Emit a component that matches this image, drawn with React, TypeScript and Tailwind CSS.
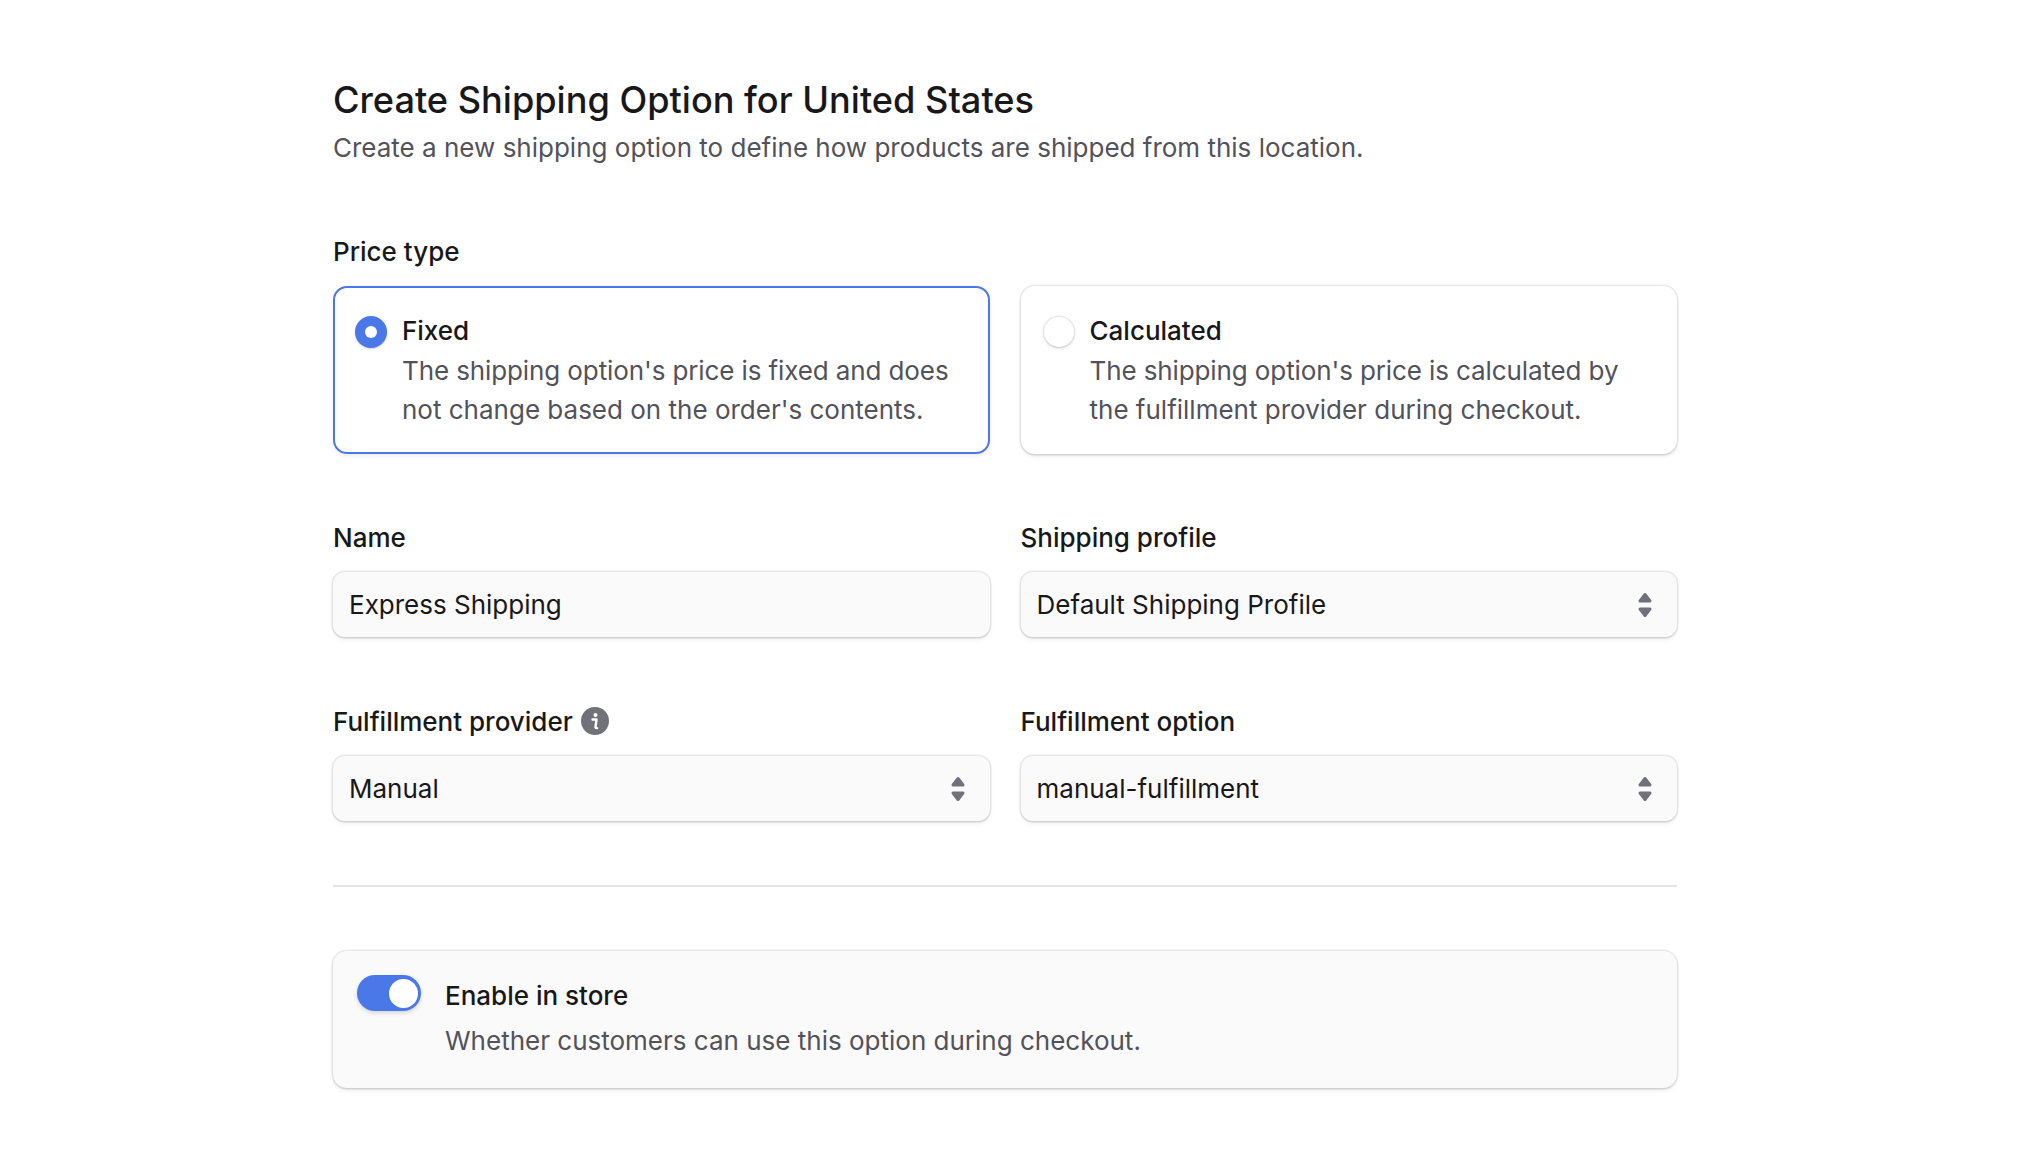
function Chevrons({ className }: { className?: string }) {
  return (
    <svg width="16" height="28" viewBox="0 0 16 28" className={className} fill="#71717a" stroke="#71717a" strokeWidth="3" strokeLinejoin="round">
      <path d="M8 3.5 L13 10 H3 Z" />
      <path d="M8 24.5 L13 18 H3 Z" />
    </svg>
  );
}

function InfoIcon() {
  return (
    <svg width="28" height="28" viewBox="0 0 28 28">
      <circle cx="14" cy="14" r="14" fill="#71717a" />
      <circle cx="14.5" cy="8" r="2" fill="#fff" />
      <path d="M11.5 12.5h4l-1 7.5c-.1.8.3 1.2 1.6 1.1" fill="none" stroke="#fff" strokeWidth="2.4" strokeLinecap="round" strokeLinejoin="round" />
    </svg>
  );
}

const cardShadow = "shadow-[0_0_0_1.5px_rgba(0,0,0,0.08),0_1.5px_3px_-1px_rgba(0,0,0,0.1),0_2.5px_5px_rgba(0,0,0,0.05)]";

function RadioCard({ selected, title, lines }: { selected?: boolean; title: string; lines: string[] }) {
  return (
    <div className={selected
      ? "h-[168px] rounded-[14px] bg-white px-[20px] pt-[23px] flex gap-[15px] border-2 border-[#4a78e8] shadow-[0_2px_4px_rgba(0,0,0,0.08)]"
      : "h-[168px] rounded-[14px] bg-white px-[20px] pt-[23px] flex gap-[15px] border-2 border-transparent " + cardShadow}>
      {selected ? (
        <div className="mt-[5px] size-[32px] shrink-0 rounded-full bg-[#4a78e8] flex items-center justify-center shadow-[0_1px_2px_rgba(0,0,0,0.2)]">
          <div className="size-[12px] rounded-full bg-white" />
        </div>
      ) : (
        <div className={"mt-[6px] size-[30px] shrink-0 mx-[1px] rounded-full bg-white " + cardShadow} />
      )}
      <div>
        <div className="text-[26px] leading-[40px] font-medium text-[#18181b]">{title}</div>
        <div className="text-[26px] leading-[39px] text-[#52525b] whitespace-nowrap">
          {lines.map(l => <div key={l} className="first:tracking-[-0.11px]">{l}</div>)}
        </div>
      </div>
    </div>
  );
}

function Field({ label, value, select, info }: { label: string; value: string; select?: boolean; info?: boolean }) {
  return (
    <div>
      <div className="h-[36px] flex items-center gap-[8px] text-[26px] font-medium text-[#18181b]">
        {label}
        {info && <InfoIcon />}
      </div>
      <div className={"mt-[17px] h-[65px] rounded-[12px] bg-[#fafafa] px-[16px] flex items-center justify-between text-[26px] text-[#18181b] " + cardShadow}>
        <span>{value}</span>
        {select && <Chevrons className="mr-[8px]" />}
      </div>
    </div>
  );
}

export default function App() {
  return (
    <div className="h-[1150px] bg-white pl-[333px] pt-[78px] font-['Inter',sans-serif] overflow-hidden">
      <div className="w-[1344px]">
        <h1 className="text-[36.15px] leading-[44px] font-medium text-[#18181b]">Create Shipping Option for United States</h1>
        <p className="mt-[6px] text-[26px] leading-[40px] text-[#52525b]">Create a new shipping option to define how products are shipped from this location.</p>

        <div className="mt-[65px] h-[36px] flex items-center text-[26px] font-medium text-[#18181b]">Price type</div>
        <div className="mt-[17px] grid grid-cols-2 gap-[31px]">
          <RadioCard selected title="Fixed" lines={["The shipping option's price is fixed and does", "not change based on the order's contents."]} />
          <RadioCard title="Calculated" lines={["The shipping option's price is calculated by", "the fulfillment provider during checkout."]} />
        </div>

        <div className="mt-[65px] grid grid-cols-2 gap-x-[31px] gap-y-[66px]">
          <Field label="Name" value="Express Shipping" />
          <Field label="Shipping profile" value="Default Shipping Profile" select />
          <Field label="Fulfillment provider" value="Manual" select info />
          <Field label="Fulfillment option" value="manual-fulfillment" select />
        </div>

        <div className="mt-[64px] h-[2px] bg-[#e4e4e7]" />

        <div className={"mt-[64px] h-[137px] rounded-[14px] bg-[#fafafa] pl-[24px] pt-[24px] flex gap-[24px] " + cardShadow}>
          <div className="w-[64px] h-[36px] shrink-0 rounded-full bg-[#4a78e8] flex items-center justify-end pr-[3px] shadow-[0_2px_4px_rgba(0,0,0,0.15)]">
            <div className="size-[29px] rounded-full bg-white" />
          </div>
          <div className="pt-[1px]">
            <div className="text-[26px] leading-[40px] font-medium text-[#18181b]">Enable in store</div>
            <div className="mt-[5px] text-[26px] leading-[40px] text-[#52525b]">Whether customers can use this option during checkout.</div>
          </div>
        </div>
      </div>
    </div>
  );
}
